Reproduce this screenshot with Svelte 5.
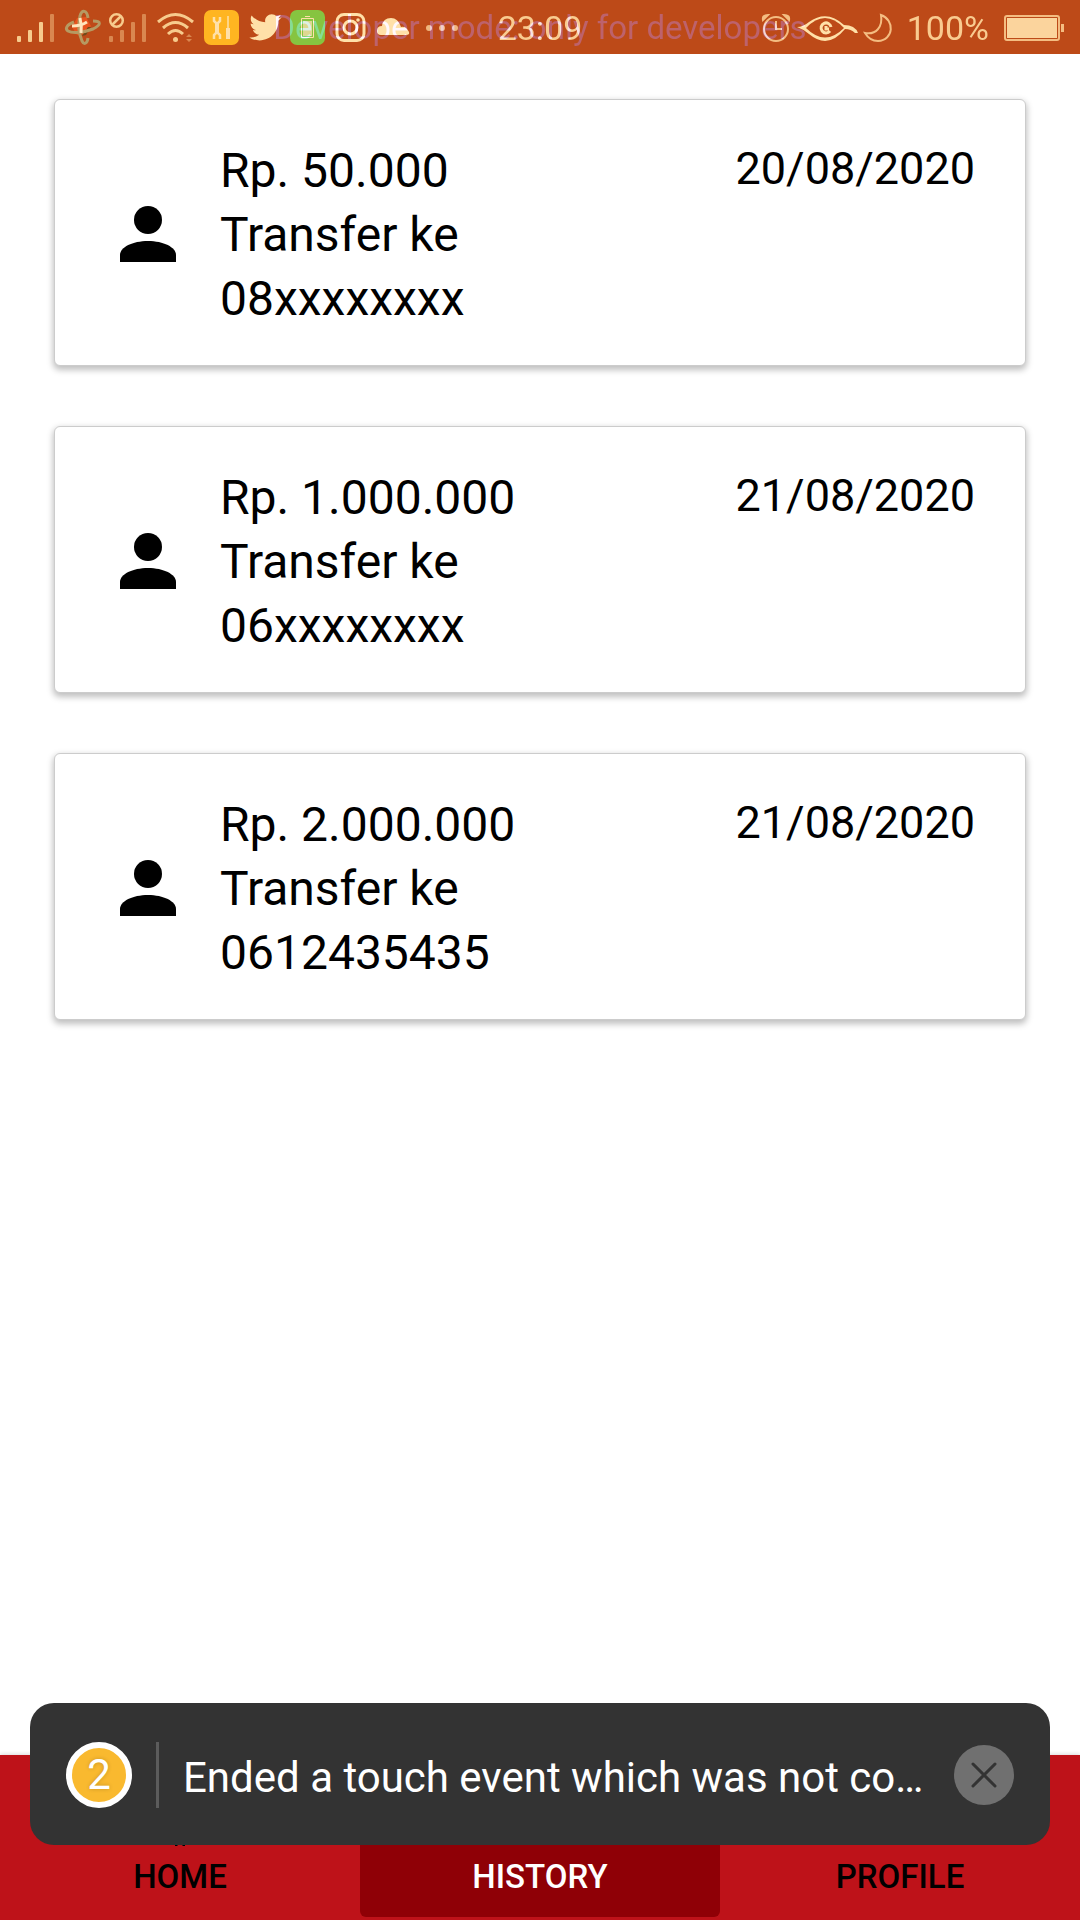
<script>
  const transactions = [
    { amount: 'Rp. 50.000', target: '08xxxxxxxx', date: '20/08/2020' },
    { amount: 'Rp. 1.000.000', target: '06xxxxxxxx', date: '21/08/2020' },
    { amount: 'Rp. 2.000.000', target: '0612435435', date: '21/08/2020' }
  ];
  const tabs = [
    { label: 'HOME', icon: 'M12 3 3 11h2v8h5v1h1v-1h2v1h1v-1h5v-8h2z' },
    { label: 'HISTORY', icon: 'M12 4a7 7 0 1 0 0 14 7 7 0 0 0 0-14zm-1 3h2v4l3 2-1 2-4-3z' },
    { label: 'PROFILE', icon: 'M12 3a4 4 0 1 1 0 8 4 4 0 0 1 0-8zm0 9c4 0 7 2 7 4v2H5v-2c0-2 3-4 7-4z' }
  ];
  let active = $state('HISTORY');
  let warning = $state(true);
</script>

<div class="screen">
  <header class="status">
    <svg class="icons" viewBox="0 0 480 54" width="480" height="54" aria-hidden="true">
      <g fill="#f7cb8d">
        <rect x="17" y="35" width="4" height="6" rx="1" />
        <rect x="28" y="29" width="4" height="12" rx="1" />
        <rect x="39" y="21" width="4" height="20" rx="1" />
        <rect x="50" y="13" width="4" height="28" rx="1" fill="#d98750" />
      </g>
      <g>
        <path d="m77 17 9-1 5 9-5 8-9 1-5-8z" fill="#e8541e" />
        <path d="m91 26-5 8-4 1 6-9z" fill="#6e4a1a" />
        <g fill="none" stroke="#b69a62" stroke-width="3">
          <path d="M88 17c-1-8-6-9-8-2-2 8-1 18 2 25 2 4 5 3 6-3" />
          <path d="M74 21c-8 3-9 7-6 9 5 3 17 1 25-2 8-4 9-8 0-8" />
        </g>
        <path d="M80 17q2 8 1 15M72 25q9 0 15-4" fill="none" stroke="#ffe6bd" stroke-width="3" />
      </g>
      <g fill="#d98750">
        <rect x="109" y="35" width="4" height="6" rx="1" />
        <rect x="120" y="29" width="4" height="12" rx="1" />
        <rect x="131" y="21" width="4" height="20" rx="1" />
        <rect x="142" y="13" width="4" height="28" rx="1" />
      </g>
      <g fill="none" stroke="#f7cb8d" stroke-width="2.500">
        <circle cx="116.500" cy="19.500" r="6.300" />
        <path d="m112 24 9-9" />
        <path d="M158 21q17.500-15 35 0M163 27q12.500-11 25 0M168 33q7.500-7 15 0" stroke-width="3" />
      </g>
      <circle cx="175.500" cy="38.500" r="2.500" fill="#f7cb8d" />
      <path d="m186 36 3-3 3 3zM186 38h6l-3 3z" fill="#d98750" />
      <rect x="204" y="9" width="35" height="35" rx="7" fill="#ffb521" />
      <g fill="none" stroke="#ffe0a8">
        <path d="M214 16v4l3 3 3-3v-4M214 38v-4l3-3 3 3v4" stroke-width="2.500" />
        <path d="M217 22v10M228 27v11" stroke-width="4" />
        <path d="M228 15v12" stroke-width="1.500" />
      </g>
      <svg x="247" y="7" width="37" height="37" viewBox="0 0 24 24">
        <path fill="#ffe0a8" d="M22.460 6C21.690 6.350 20.860 6.580 20 6.690C20.880 6.160 21.560 5.320 21.880 4.310C21.050 4.810 20.130 5.160 19.160 5.360C18.370 4.500 17.260 4 16 4C13.650 4 11.730 5.920 11.730 8.290C11.730 8.630 11.770 8.960 11.840 9.270C8.280 9.090 5.110 7.380 3 4.790C2.630 5.420 2.420 6.160 2.420 6.940C2.420 8.430 3.170 9.750 4.330 10.500C3.620 10.500 2.960 10.300 2.380 10C2.380 12.110 3.860 13.850 5.820 14.240C5.460 14.340 5.080 14.390 4.690 14.390C4.420 14.390 4.150 14.360 3.890 14.310C4.430 16 6 17.260 7.890 17.290C6.430 18.450 4.580 19.130 2.560 19.130C2.220 19.130 1.880 19.110 1.540 19.070C3.440 20.290 5.700 21 8.120 21C16 21 20.330 14.460 20.330 8.790C20.330 8.600 20.330 8.420 20.320 8.230C21.160 7.630 21.880 6.870 22.460 6Z" />
      </svg>
      <rect x="290" y="9" width="35" height="35" rx="7" fill="#86c440" />
      <g fill="none" stroke="#ffe0a8">
        <path d="M301.500 17.500h12v19h-12zM305 15.500h5" />
        <path d="M303 20h9v15h-9z" fill="#ddd891" stroke="none" />
        <rect x="337" y="13.500" width="27" height="26" rx="7" stroke-width="3" />
        <circle cx="350.500" cy="26.500" r="6.500" stroke-width="3" />
      </g>
      <circle cx="358" cy="19" r="1.800" fill="#ffe0a8" />
      <path d="M381 34a4 4 0 0 1-4-4q0-5 5-5 1-8 9-8 7 0 10 9 5-1 8 5 1 3-3 3z" fill="#ffe0a8" />
      <g fill="#efb67d"><circle cx="429" cy="27" r="3" /><circle cx="442" cy="27" r="3" /><circle cx="455" cy="27" r="3" /></g>
    </svg>
    <time>23:09</time>
    <div class="right">
      <svg viewBox="760 0 140 54" width="140" height="54" aria-hidden="true">
        <g fill="none" stroke="#f4bd82" stroke-width="2">
          <circle cx="776" cy="28" r="12" />
          <path d="M776 20v8h6" />
          <path d="M763 19q-1-5 5-5zM789 19q1-5-5-5z" fill="#f4bd82" />
          <path d="M881 14c14 5 13 25-3 26-6 0-10-3-13-8 11 2 18-6 16-18z" />
        </g>
        <path d="M797 26q6 0 12-5 18-13 35 3 11 0 14 8h-3q-4-4-10-4-17 21-36 5-6-5-12-7z" fill="#ffe0a8" />
        <path d="M806 27q19-20 38 0-19 19-38 0z" fill="#bd4a18" />
        <path d="M830 30a5 5 0 1 1 1-4M826 25v3h3" fill="none" stroke="#ffe0a8" stroke-width="3" />
      </svg>
      <span>100%</span>
      <svg viewBox="0 0 60 26" width="60" height="26" aria-hidden="true">
        <rect x="1" y="1" width="54" height="24" rx="2" fill="none" stroke="#f4bd82" stroke-width="2" />
        <path d="M3 3h50v20H3z" fill="#fbd49d" />
        <path d="M57 9h3v8h-3z" fill="#f4bd82" />
      </svg>
    </div>
    <p class="banner">Developer mode: only for developers</p>
  </header>

  <main>
    {#each transactions as t}
      <article>
        <svg viewBox="0 0 24 24" aria-hidden="true">
          <circle cx="12" cy="8" r="4" />
          <path d="M12 14c4.420 0 8 1.790 8 4v2H4v-2c0-2.210 3.580-4 8-4z" />
        </svg>
        <div class="details">
          <p>{t.amount}</p>
          <p>Transfer ke</p>
          <p>{t.target}</p>
        </div>
        <time>{t.date}</time>
      </article>
    {/each}
  </main>

  <nav>
    {#each tabs as tab}
      <button class:active={active === tab.label} onclick={() => (active = tab.label)}>
        <svg viewBox="0 0 24 24" aria-hidden="true"><path d={tab.icon} /></svg>
        {tab.label}
      </button>
    {/each}
  </nav>

  {#if warning}
    <aside class="toast">
      <span class="count">2</span>
      <p>Ended a touch event which was not counted in `trackedTouchCount`.</p>
      <button aria-label="Dismiss" onclick={() => (warning = false)}>
        <svg viewBox="0 0 24 24" aria-hidden="true"><path d="m1 1 22 22M23 1 1 23" /></svg>
      </button>
    </aside>
  {/if}
</div>

<style>
  :global(body) { margin: 0; background: #fff; }
  .screen {
    position: relative;
    display: flex;
    flex-direction: column;
    min-height: 100vh;
    font-family: Roboto, sans-serif;
    color: #000;
  }
  p { margin: 0; }
  button { border: 0; padding: 0; font: inherit; cursor: pointer; }
  .status {
    position: relative;
    isolation: isolate;
    display: grid;
    grid-template-columns: 1fr auto 1fr;
    align-items: center;
    height: 54px;
    background: #bd4a18;
    color: #f9cb90;
    font-size: 34px;
    line-height: 56px;
  }
  .status svg { display: block; }
  .icons { width: 480px; }
  .right { display: flex; align-items: center; justify-content: flex-end; gap: 7px; padding-right: 16px; }
  .right span { margin-right: 8px; line-height: 52px; }
  .banner {
    position: absolute;
    inset: 0;
    text-align: center;
    font-size: 33px;
    color: #001854;
    mix-blend-mode: plus-lighter;
    white-space: nowrap;
  }
  main { flex: 1; display: flex; flex-direction: column; gap: 60px; padding: 45px 54px; }
  article {
    display: flex;
    align-items: center;
    box-sizing: border-box;
    padding: 37px 50px 34px 51px;
    border: 1px solid #ccc;
    border-radius: 6px;
    background: #fff;
    box-shadow: 0 3px 6px 1px rgb(0 0 0 / 25%);
  }
  article svg { width: 84px; margin-right: 30px; }
  .details { flex: 1; padding-top: 2px; font-size: 48px; line-height: 64px; }
  article time { align-self: flex-start; font-size: 45px; line-height: 64px; }
  nav { display: flex; height: 165px; background: #be1219; box-shadow: 0 -1px 4px rgb(0 0 0 / 15%); }
  nav button {
    flex: 1;
    display: flex;
    flex-direction: column;
    align-items: center;
    justify-content: flex-end;
    margin-bottom: 3px;
    padding-bottom: 20px;
    border-radius: 6px;
    background: none;
    font-size: 33px;
    font-weight: 500;
    line-height: 40px;
  }
  nav svg { width: 60px; margin-bottom: 1px; fill: currentColor; }
  nav .active { background: #8f0006; color: #fff; }
  .toast {
    position: absolute;
    left: 30px;
    right: 30px;
    bottom: 75px;
    display: flex;
    align-items: center;
    box-sizing: border-box;
    height: 142px;
    padding: 2px 36px 0;
    border-radius: 24px;
    background: #333;
    color: #fff;
    font-size: 42px;
  }
  .count {
    box-sizing: border-box;
    width: 66px;
    height: 66px;
    border: 6px solid #fff;
    border-radius: 50%;
    background: #f9b92f;
    line-height: 54px;
    text-align: center;
    text-shadow: 0 0 4px rgb(0 0 0 / 20%);
  }
  .toast p {
    flex: 1;
    min-width: 0;
    height: 66px;
    margin: 0 30px 0 24px;
    padding-left: 24px;
    border-left: 3px solid #5c5c5c;
    line-height: 72px;
    overflow: hidden;
    text-overflow: ellipsis;
    white-space: nowrap;
  }
  .toast button {
    display: grid;
    place-items: center;
    width: 60px;
    height: 60px;
    border-radius: 50%;
    background: #707070;
  }
  .toast svg { width: 24px; overflow: visible; fill: none; stroke: #333; stroke-width: 3; stroke-linecap: round; }
</style>
